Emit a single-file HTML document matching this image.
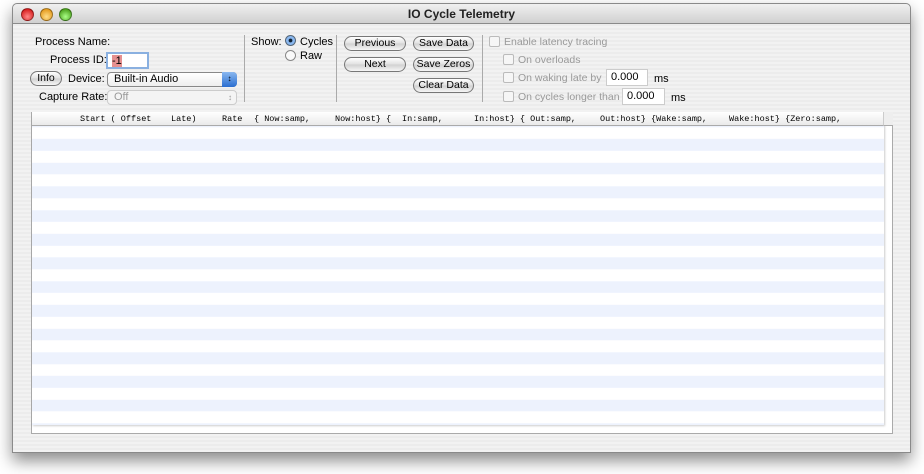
<!DOCTYPE html>
<html><head><style>
*{margin:0;padding:0;box-sizing:border-box}
body{width:924px;height:474px;background:#fff;position:relative;overflow:hidden;font-family:"Liberation Sans",sans-serif;font-size:11px;color:#000}
.win{position:absolute;left:12px;top:3px;width:899px;height:450px;background:repeating-linear-gradient(#ececec 0 2px,#f2f2f2 2px 4px);border:1px solid #8a8a8a;border-radius:5px 5px 0 0;box-shadow:0 8px 16px rgba(0,0,0,.45)}
.title{position:absolute;left:0;top:0;right:0;height:20px;background:linear-gradient(#f0f0f0,#d0d0d0);border-bottom:1px solid #8a8a8a;border-radius:5px 5px 0 0;text-align:center;font-size:12px;font-weight:bold;line-height:21px;color:#222}
.dot{position:absolute;top:4px;width:13px;height:13px;border-radius:50%;border:1px solid rgba(0,0,0,.35)}
.a{position:absolute;white-space:nowrap}
.btn{position:absolute;height:15px;border:1px solid #777;border-radius:8px;background:linear-gradient(#fff,#e0e0e0 50%,#d0d0d0 51%,#f6f6f6);text-align:center;line-height:13px;font-size:10.5px}
.cb{position:absolute;width:11px;height:11px;border:1px solid #bbb;border-radius:2px;background:#f6f6f6}
.gray{color:#999;font-size:10.5px}
.field{position:absolute;height:17px;background:#fff;border:1px solid #999;border-top-color:#777;line-height:15px;padding-left:4px}
.m{position:absolute;top:114px;font-family:"Liberation Mono",monospace;font-size:8.5px;white-space:pre;line-height:10px}
</style></head><body>
<div class="win">
 <div class="title">IO Cycle Telemetry</div>
 <div class="dot" style="left:8px;background:radial-gradient(circle at 50% 70%,#f88,#c00)"></div>
 <div class="dot" style="left:27px;background:radial-gradient(circle at 50% 70%,#fd8,#d80)"></div>
 <div class="dot" style="left:46px;background:radial-gradient(circle at 50% 70%,#af8,#380)"></div>
</div>
<div class="a" style="left:35px;top:36px">Process Name:</div>
<div class="a" style="left:50px;top:54px">Process ID:</div>
<div class="field" style="left:106px;top:52px;width:43px;border:2px solid #8ab0e0"><span style="background:#e59090">-1</span></div>
<div class="btn" style="left:30px;top:71px;width:32px">Info</div>
<div class="a" style="left:68px;top:73px">Device:</div>
<div class="a" style="left:107px;top:72px;width:130px;height:15px;border:1px solid #888;border-radius:4px;background:linear-gradient(#fff,#eee);padding-left:6px;line-height:13px">Built-in Audio<span style="position:absolute;right:-1px;top:-1px;width:15px;height:15px;background:linear-gradient(#8ab8f0,#2a6ed0);border-radius:0 4px 4px 0;color:#000;font-size:8px;text-align:center;line-height:14px">↕</span></div>
<div class="a" style="left:39px;top:91px">Capture Rate:</div>
<div class="a" style="left:107px;top:90px;width:130px;height:15px;border:1px solid #ccc;border-radius:4px;background:#f4f4f4;padding-left:6px;line-height:13px;color:#999">Off<span style="position:absolute;right:4px;top:0;font-size:8px">↕</span></div>
<div class="a" style="left:244px;top:35px;width:1px;height:67px;background:#aaa"></div>
<div class="a" style="left:251px;top:36px">Show:</div>
<div class="a" style="left:285px;top:35px;width:11px;height:11px;border-radius:50%;border:1px solid #567;background:radial-gradient(#123 25%,#8ab8f0 35%)"></div>
<div class="a" style="left:300px;top:36px">Cycles</div>
<div class="a" style="left:285px;top:50px;width:11px;height:11px;border-radius:50%;border:1px solid #888;background:#fafafa"></div>
<div class="a" style="left:300px;top:50px">Raw</div>
<div class="a" style="left:336px;top:35px;width:1px;height:67px;background:#aaa"></div>
<div class="btn" style="left:344px;top:36px;width:62px">Previous</div>
<div class="btn" style="left:344px;top:57px;width:62px">Next</div>
<div class="btn" style="left:413px;top:36px;width:61px">Save Data</div>
<div class="btn" style="left:413px;top:57px;width:61px">Save Zeros</div>
<div class="btn" style="left:413px;top:78px;width:61px">Clear Data</div>
<div class="a" style="left:482px;top:35px;width:1px;height:67px;background:#aaa"></div>
<div class="cb" style="left:489px;top:36px"></div><div class="a gray" style="left:504px;top:36px">Enable latency tracing</div>
<div class="cb" style="left:503px;top:54px"></div><div class="a gray" style="left:518px;top:54px">On overloads</div>
<div class="cb" style="left:503px;top:72px"></div><div class="a gray" style="left:518px;top:72px">On waking late by</div>
<div class="field" style="left:606px;top:69px;width:42px;border-color:#ccc">0.000</div><div class="a" style="left:654px;top:73px">ms</div>
<div class="cb" style="left:503px;top:91px"></div><div class="a gray" style="left:518px;top:91px">On cycles longer than</div>
<div class="field" style="left:622px;top:88px;width:43px;border-color:#ccc">0.000</div><div class="a" style="left:671px;top:92px">ms</div>
<div class="a" style="left:31px;top:112px;width:862px;height:322px;background:#fff;border:1px solid #aaa"></div>
<div class="a" style="left:32px;top:113px;width:852px;height:312px;background:repeating-linear-gradient(#edf2fd 0 11.85px,#fff 11.85px 23.7px);background-position:0 2.3px;box-shadow:1px 1px 2px rgba(0,0,0,.2)"></div>
<div class="a" style="left:32px;top:112px;width:852px;height:14px;background:linear-gradient(#fff,#eaeaea);border-bottom:1px solid #aaa"></div>
<div class="m" style="left:80px">Start ( Offset</div>
<div class="m" style="left:171px">Late)</div>
<div class="m" style="left:222px">Rate</div>
<div class="m" style="left:254px">{ Now:samp,</div>
<div class="m" style="left:335px">Now:host} {</div>
<div class="m" style="left:402px">In:samp,</div>
<div class="m" style="left:474px">In:host} { Out:samp,</div>
<div class="m" style="left:600px">Out:host} {Wake:samp,</div>
<div class="m" style="left:729px">Wake:host} {Zero:samp,</div>
<div class="a" style="left:883px;top:112px;width:10px;height:14px;border-left:1px solid #ccc;border-bottom:1px solid #aaa;background:#eee"></div>
</body></html>
